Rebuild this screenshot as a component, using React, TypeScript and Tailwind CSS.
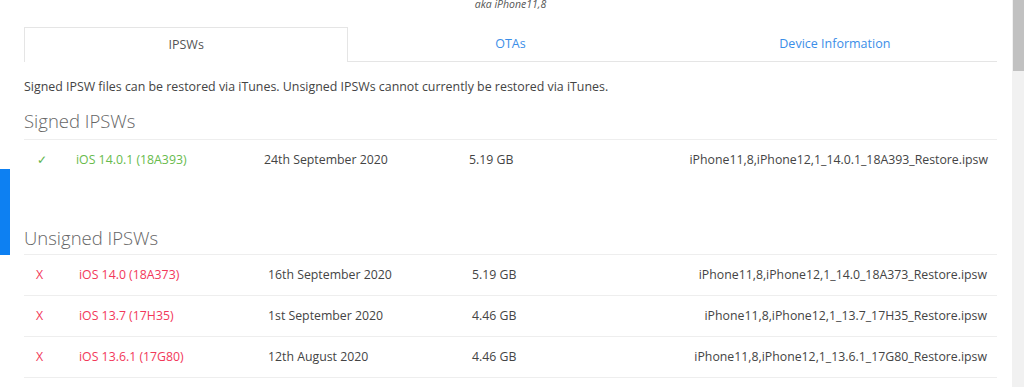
const signed = [
  {
    version: 'iOS 14.0.1 (18A393)',
    date: '24th September 2020',
    size: '5.19 GB',
    file: 'iPhone11,8,iPhone12,1_14.0.1_18A393_Restore.ipsw',
  },
];

const unsigned = [
  {
    version: 'iOS 14.0 (18A373)',
    date: '16th September 2020',
    size: '5.19 GB',
    file: 'iPhone11,8,iPhone12,1_14.0_18A373_Restore.ipsw',
  },
  {
    version: 'iOS 13.7 (17H35)',
    date: '1st September 2020',
    size: '4.46 GB',
    file: 'iPhone11,8,iPhone12,1_13.7_17H35_Restore.ipsw',
  },
  {
    version: 'iOS 13.6.1 (17G80)',
    date: '12th August 2020',
    size: '4.46 GB',
    file: 'iPhone11,8,iPhone12,1_13.6.1_17G80_Restore.ipsw',
  },
];

export default function App() {
  return (
    <div
      className="flex h-[387px] w-[1024px] overflow-hidden bg-white text-[12.3px] text-[#555]"
      style={{ fontFamily: '"Open Sans", "Liberation Sans", sans-serif' }}
    >
      {/* feedback tab */}
      <div className="relative w-0">
        <div className="absolute left-0 top-[169px] h-[86px] w-[10px] bg-[#0d80f2]" />
      </div>

      <div className="flex-1 pl-6 pr-[15px]">
        <p className="-mt-[3px] h-[30px] text-center text-[10.5px] italic leading-[15px] text-[#555]">
          aka iPhone11,8
        </p>

        {/* tabs */}
        <div className="grid h-[35px] grid-cols-3 border-b border-[#e5e5e5] text-[12.5px]">
          <div className="-mb-px flex items-center justify-center border border-b-0 border-[#e5e5e5] bg-white text-[#555]">
            IPSWs
          </div>
          <div className="flex items-center justify-center text-[#3b8ee8]">OTAs</div>
          <div className="flex items-center justify-center text-[#3b8ee8]">Device Information</div>
        </div>

        <p className="mt-[15px] text-[12.4px] leading-[20px] text-[#444]">
          Signed IPSW files can be restored via iTunes. Unsigned IPSWs cannot currently be restored via iTunes.
        </p>

        <h2 className="mt-[10px] pb-[4px] text-[18.5px] font-light leading-[28px] text-[#666]">Signed IPSWs</h2>
        <div className="border-t border-[#eee]">
          {signed.map((r) => (
            <div
              key={r.file}
              className="grid h-[41px] grid-cols-[39px_188px_205px_1fr_auto] items-center"
            >
              <span className="pl-[13px] text-[#5db44a]">✓</span>
              <span className="pl-[13px] text-[#68bb4c]">{r.version}</span>
              <span className="pl-[13px] text-[#444]">{r.date}</span>
              <span className="pl-[13px] text-[#444]">{r.size}</span>
              <span className="pr-[9px] text-[#444]">{r.file}</span>
            </div>
          ))}
        </div>

        <h2 className="mt-[43px] pb-[2px] text-[18.5px] font-light leading-[28px] text-[#666]">Unsigned IPSWs</h2>
        <div className="border-t border-[#eee]">
          {unsigned.map((r) => (
            <div
              key={r.file}
              className="grid h-[41px] grid-cols-[42px_189px_204px_1fr_auto] items-center border-b border-[#eee] pt-px"
            >
              <span className="pl-[12px] text-[#f2385a]">X</span>
              <span className="pl-[13px] text-[#f2385a]">{r.version}</span>
              <span className="pl-[13px] text-[#444]">{r.date}</span>
              <span className="pl-[13px] text-[#444]">{r.size}</span>
              <span className="pr-[10px] text-[#444]">{r.file}</span>
            </div>
          ))}
        </div>
      </div>

      {/* scrollbar */}
      <div className="flex w-[12px] shrink-0 flex-col bg-[#f1f1f1] pl-px">
        <div className="h-[71px] w-[11px] bg-[#c1c1c1]" />
      </div>
    </div>
  );
}
